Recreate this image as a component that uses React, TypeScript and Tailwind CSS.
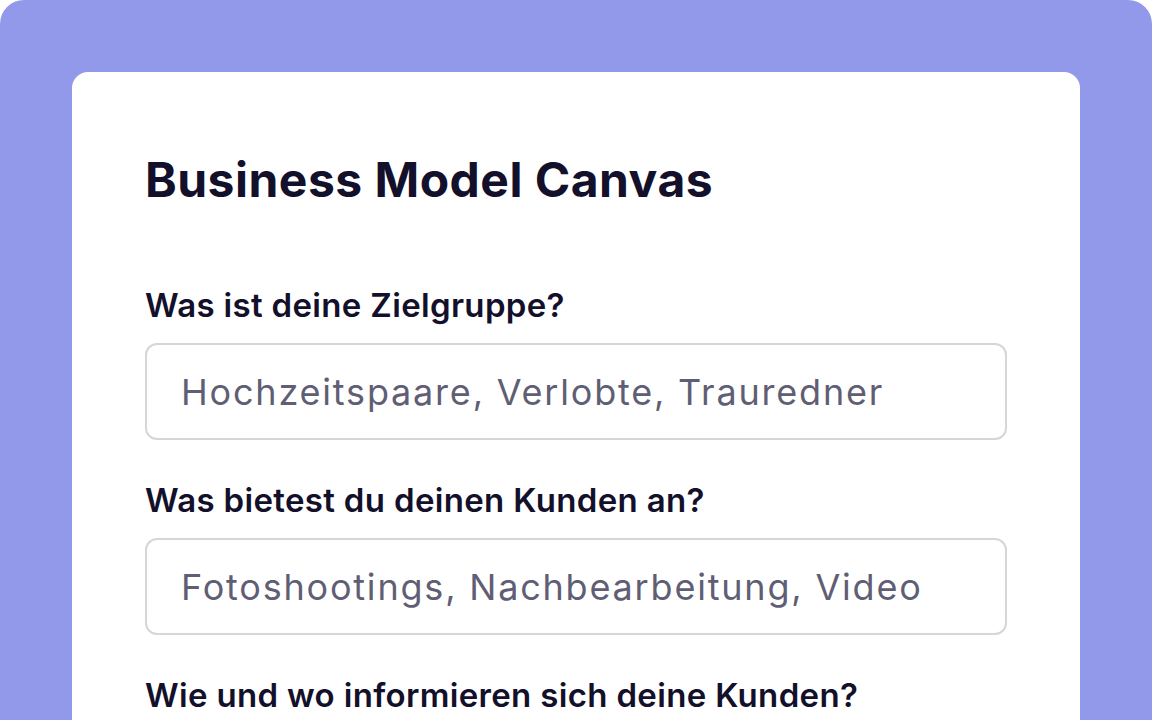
import React from 'react';

const fields = [
  { label: 'Was ist deine Zielgruppe?', placeholder: 'Hochzeitspaare, Verlobte, Trauredner' },
  { label: 'Was bietest du deinen Kunden an?', placeholder: 'Fotoshootings, Nachbearbeitung, Video' },
  { label: 'Wie und wo informieren sich deine Kunden?', placeholder: 'Instagram, Google, Hochzeitsmessen' },
];

const App = () => {
  return (
    <div className="h-[720px] overflow-hidden bg-white font-['Inter',sans-serif]">
      <div className="h-full rounded-t-[24px] bg-[#9298EA] px-[72px] pt-[72px]">
        <div className="h-[800px] rounded-2xl bg-white px-[73px] pt-[80px]">
          <h1 className="text-[48px] leading-[56px] font-bold tracking-[0.01em] text-[#13102B]">
            Business Model Canvas
          </h1>

          <div className="mt-[79px] flex flex-col gap-[42px] w-[862px]">
            {fields.map((f) => (
              <div key={f.label} className="flex flex-col gap-[20px]">
                <label className="text-[33px] leading-[36px] font-semibold tracking-[0.01em] text-[#13102B]">
                  {f.label}
                </label>
                <input
                  placeholder={f.placeholder}
                  className="h-[97px] rounded-xl border-2 border-[#D6D6DA] px-[34px] text-[36px] tracking-[0.05em] text-[#13102B] placeholder:text-[#5F5E74] outline-none"
                />
              </div>
            ))}
          </div>
        </div>
      </div>
    </div>
  );
};

export default App;
